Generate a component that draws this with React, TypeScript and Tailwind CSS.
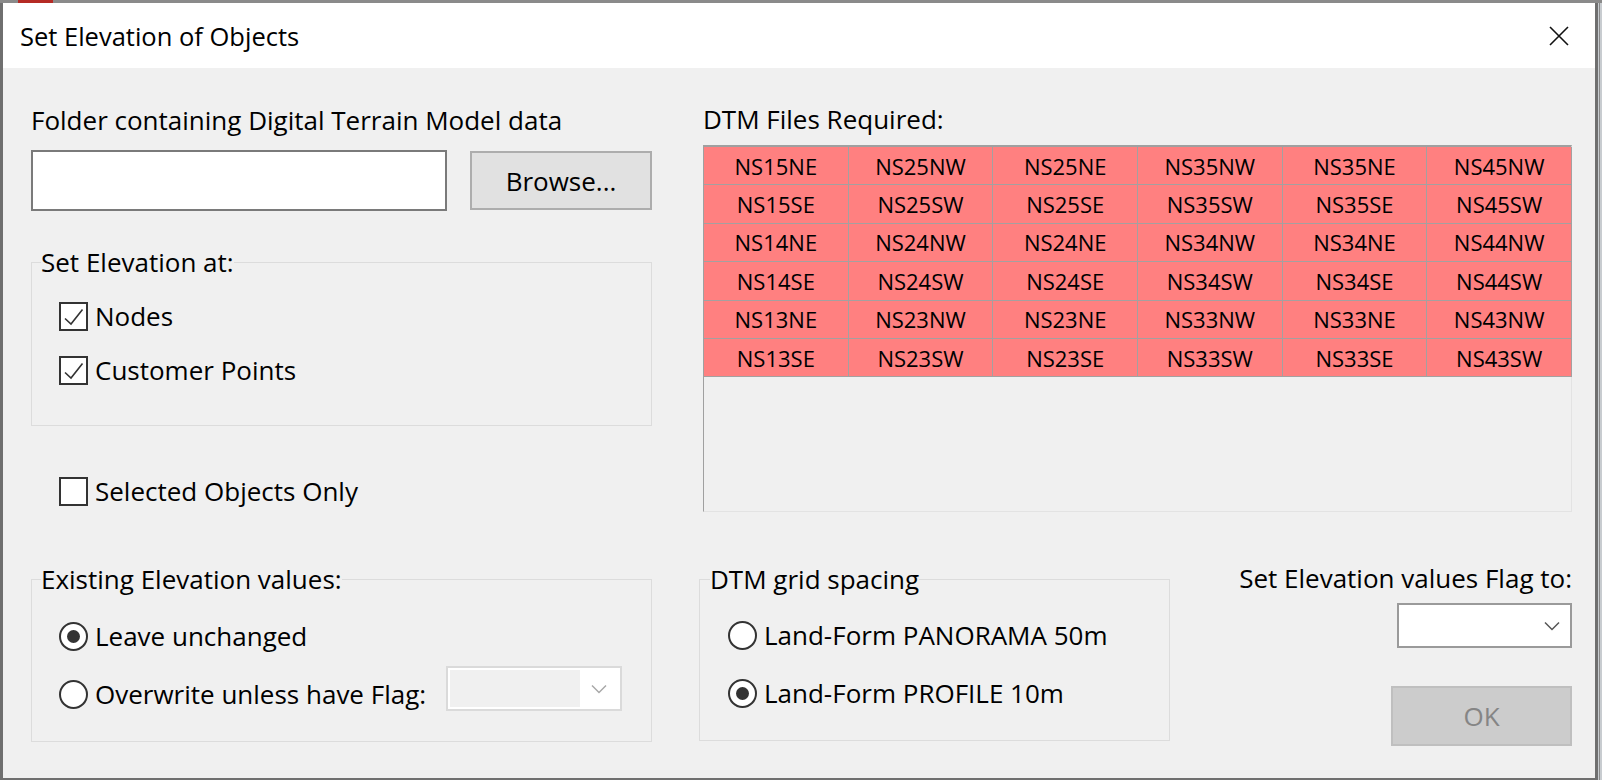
import React from "react";

const tiles = [
  ["NS15NE", "NS25NW", "NS25NE", "NS35NW", "NS35NE", "NS45NW"],
  ["NS15SE", "NS25SW", "NS25SE", "NS35SW", "NS35SE", "NS45SW"],
  ["NS14NE", "NS24NW", "NS24NE", "NS34NW", "NS34NE", "NS44NW"],
  ["NS14SE", "NS24SW", "NS24SE", "NS34SW", "NS34SE", "NS44SW"],
  ["NS13NE", "NS23NW", "NS23NE", "NS33NW", "NS33NE", "NS43NW"],
  ["NS13SE", "NS23SW", "NS23SE", "NS33SW", "NS33SE", "NS43SW"],
];

function CheckBox({ checked }: { checked?: boolean }) {
  return (
    <span className="flex h-[29px] w-[29px] shrink-0 items-center justify-center border-2 border-[#333333] bg-white">
      {checked && (
        <svg width="25" height="25" viewBox="0 0 25 25">
          <path d="M4 14.5 L10 20 L21.5 5.5" fill="none" stroke="#333333" strokeWidth="1.6" />
        </svg>
      )}
    </span>
  );
}

function Radio({ checked }: { checked?: boolean }) {
  return (
    <span className="flex h-[29px] w-[29px] shrink-0 items-center justify-center rounded-full border-2 border-[#333333] bg-white">
      {checked && <span className="h-[13px] w-[13px] rounded-full bg-[#333333]" />}
    </span>
  );
}

function Chevron({ color }: { color: string }) {
  return (
    <svg width="16" height="10" viewBox="0 0 16 10">
      <path d="M1 1.5 L8 8.5 L15 1.5" fill="none" stroke={color} strokeWidth="1.5" />
    </svg>
  );
}

export default function App() {
  return (
    <div className="flex h-[780px] w-[1602px] flex-col overflow-hidden bg-[#9a9a9a] font-['Open_Sans',sans-serif] text-[26px] leading-[30px] text-black">
      {/* window behind */}
      <div className="flex h-[3px] shrink-0 bg-[#8a8a8a]">
        <div className="ml-[18px] w-[35px] bg-[#b52a24]" />
      </div>

      <div className="flex flex-1">
        <div className="flex h-[777px] w-[1598px] flex-col border-b-2 border-l-[3px] border-r-[3px] border-[#6f6f6f]">
          {/* title bar */}
          <div className="flex h-[65px] shrink-0 items-center justify-between bg-white pl-[17px] pr-[26px]">
            <span className="text-[25.5px]">Set Elevation of Objects</span>
            <svg width="20" height="20" viewBox="0 0 20 20">
              <path d="M1 1 L19 19 M19 1 L1 19" stroke="#111111" strokeWidth="1.6" />
            </svg>
          </div>

          {/* body */}
          <div className="flex flex-1 flex-col bg-[#f0f0f0] pl-[28px] pr-[23px]">
            <div className="flex">
              {/* left column */}
              <div className="flex w-[621px] flex-col">
                <div className="mt-[37px] h-[30px] whitespace-nowrap">Folder containing Digital Terrain Model data</div>
                <div className="mt-[15px] flex items-start">
                  <div className="h-[61px] w-[416px] border-2 border-[#7a7a7a] bg-white" />
                  <button className="ml-[23px] mt-px flex h-[59px] w-[182px] items-center justify-center border-2 border-[#adadad] bg-[#e1e1e1]">
                    Browse...
                  </button>
                </div>

                <fieldset className="mt-[37px] border border-[#dcdcdc] px-[9px] pb-[40px]">
                  <legend className="leading-[28px]">Set Elevation at:</legend>
                  <div className="flex flex-col gap-[24px] pl-[18px] pt-[25px]">
                    <label className="flex h-[30px] items-center gap-[7px]">
                      <CheckBox checked />
                      <span>Nodes</span>
                    </label>
                    <label className="flex h-[30px] items-center gap-[7px]">
                      <CheckBox checked />
                      <span>Customer Points</span>
                    </label>
                  </div>
                </fieldset>

                <label className="ml-[28px] mt-[50px] flex h-[30px] items-center gap-[7px]">
                  <CheckBox />
                  <span>Selected Objects Only</span>
                </label>
              </div>

              {/* right column */}
              <div className="ml-[51px] flex w-[869px] flex-col">
                <div className="mt-[36px] h-[30px]">DTM Files Required:</div>
                <div className="mt-[11px] h-[367px] border-b border-l border-r border-t-2 border-b-[#e3e3e3] border-l-[#a0a0a0] border-r-[#e3e3e3] border-t-[#a0a0a0] bg-[#f0f0f0]">
                  <div className="grid w-[868px] grid-cols-6 gap-px bg-[#a4a0a0] pb-px pr-px text-[22px]">
                    {tiles.flat().map((t) => (
                      <div key={t} className="flex h-[37.4px] items-center justify-center bg-[#ff8080]">
                        {t}
                      </div>
                    ))}
                  </div>
                </div>
              </div>
            </div>

            {/* bottom row */}
            <div className="mt-[53px] flex items-start">
              <fieldset className="w-[621px] border border-[#dcdcdc] px-[9px] pb-[32px]">
                <legend className="leading-[28px]">Existing Elevation values:</legend>
                <div className="flex flex-col gap-[28px] pl-[18px] pt-[28px]">
                  <label className="flex h-[30px] items-center gap-[7px]">
                    <Radio checked />
                    <span>Leave unchanged</span>
                  </label>
                  <div className="flex h-[30px] items-center">
                    <label className="flex w-[387px] items-center gap-[7px]">
                      <Radio />
                      <span className="whitespace-nowrap">Overwrite unless have Flag:</span>
                    </label>
                    <div className="-mt-[11px] flex h-[45px] w-[176px] border-2 border-[#dadada] bg-white p-[2px]">
                      <div className="w-[130px] bg-[#f0f0f0]" />
                      <div className="flex flex-1 items-center justify-center">
                        <Chevron color="#a8a8a8" />
                      </div>
                    </div>
                  </div>
                </div>
              </fieldset>

              <fieldset className="ml-[47px] w-[471px] border border-[#dcdcdc] px-[10px] pb-[32px]">
                <legend className="leading-[28px]">DTM grid spacing</legend>
                <div className="flex flex-col gap-[28px] pl-[18px] pt-[27px]">
                  <label className="flex h-[30px] items-center gap-[7px]">
                    <Radio />
                    <span className="whitespace-nowrap">Land-Form PANORAMA 50m</span>
                  </label>
                  <label className="flex h-[30px] items-center gap-[7px]">
                    <Radio checked />
                    <span className="whitespace-nowrap">Land-Form PROFILE 10m</span>
                  </label>
                </div>
              </fieldset>

              <div className="ml-auto flex flex-col items-end">
                <div className="-mt-[2px] h-[30px] whitespace-nowrap">Set Elevation values Flag to:</div>
                <div className="mt-[10px] flex h-[45px] w-[175px] items-center justify-end border-2 border-[#9a9a9a] bg-white pr-[10px]">
                  <Chevron color="#555555" />
                </div>
                <button className="mt-[38px] flex h-[60px] w-[181px] items-center justify-center border-2 border-[#bfbfbf] bg-[#cccccc] text-[#858585]">
                  OK
                </button>
              </div>
            </div>
          </div>
        </div>

        {/* window behind, right edge */}
        <div className="flex flex-1 bg-[#c8ccd0]">
          <div className="ml-[1px] w-px bg-[#8a8a8a]" />
        </div>
      </div>
    </div>
  );
}
